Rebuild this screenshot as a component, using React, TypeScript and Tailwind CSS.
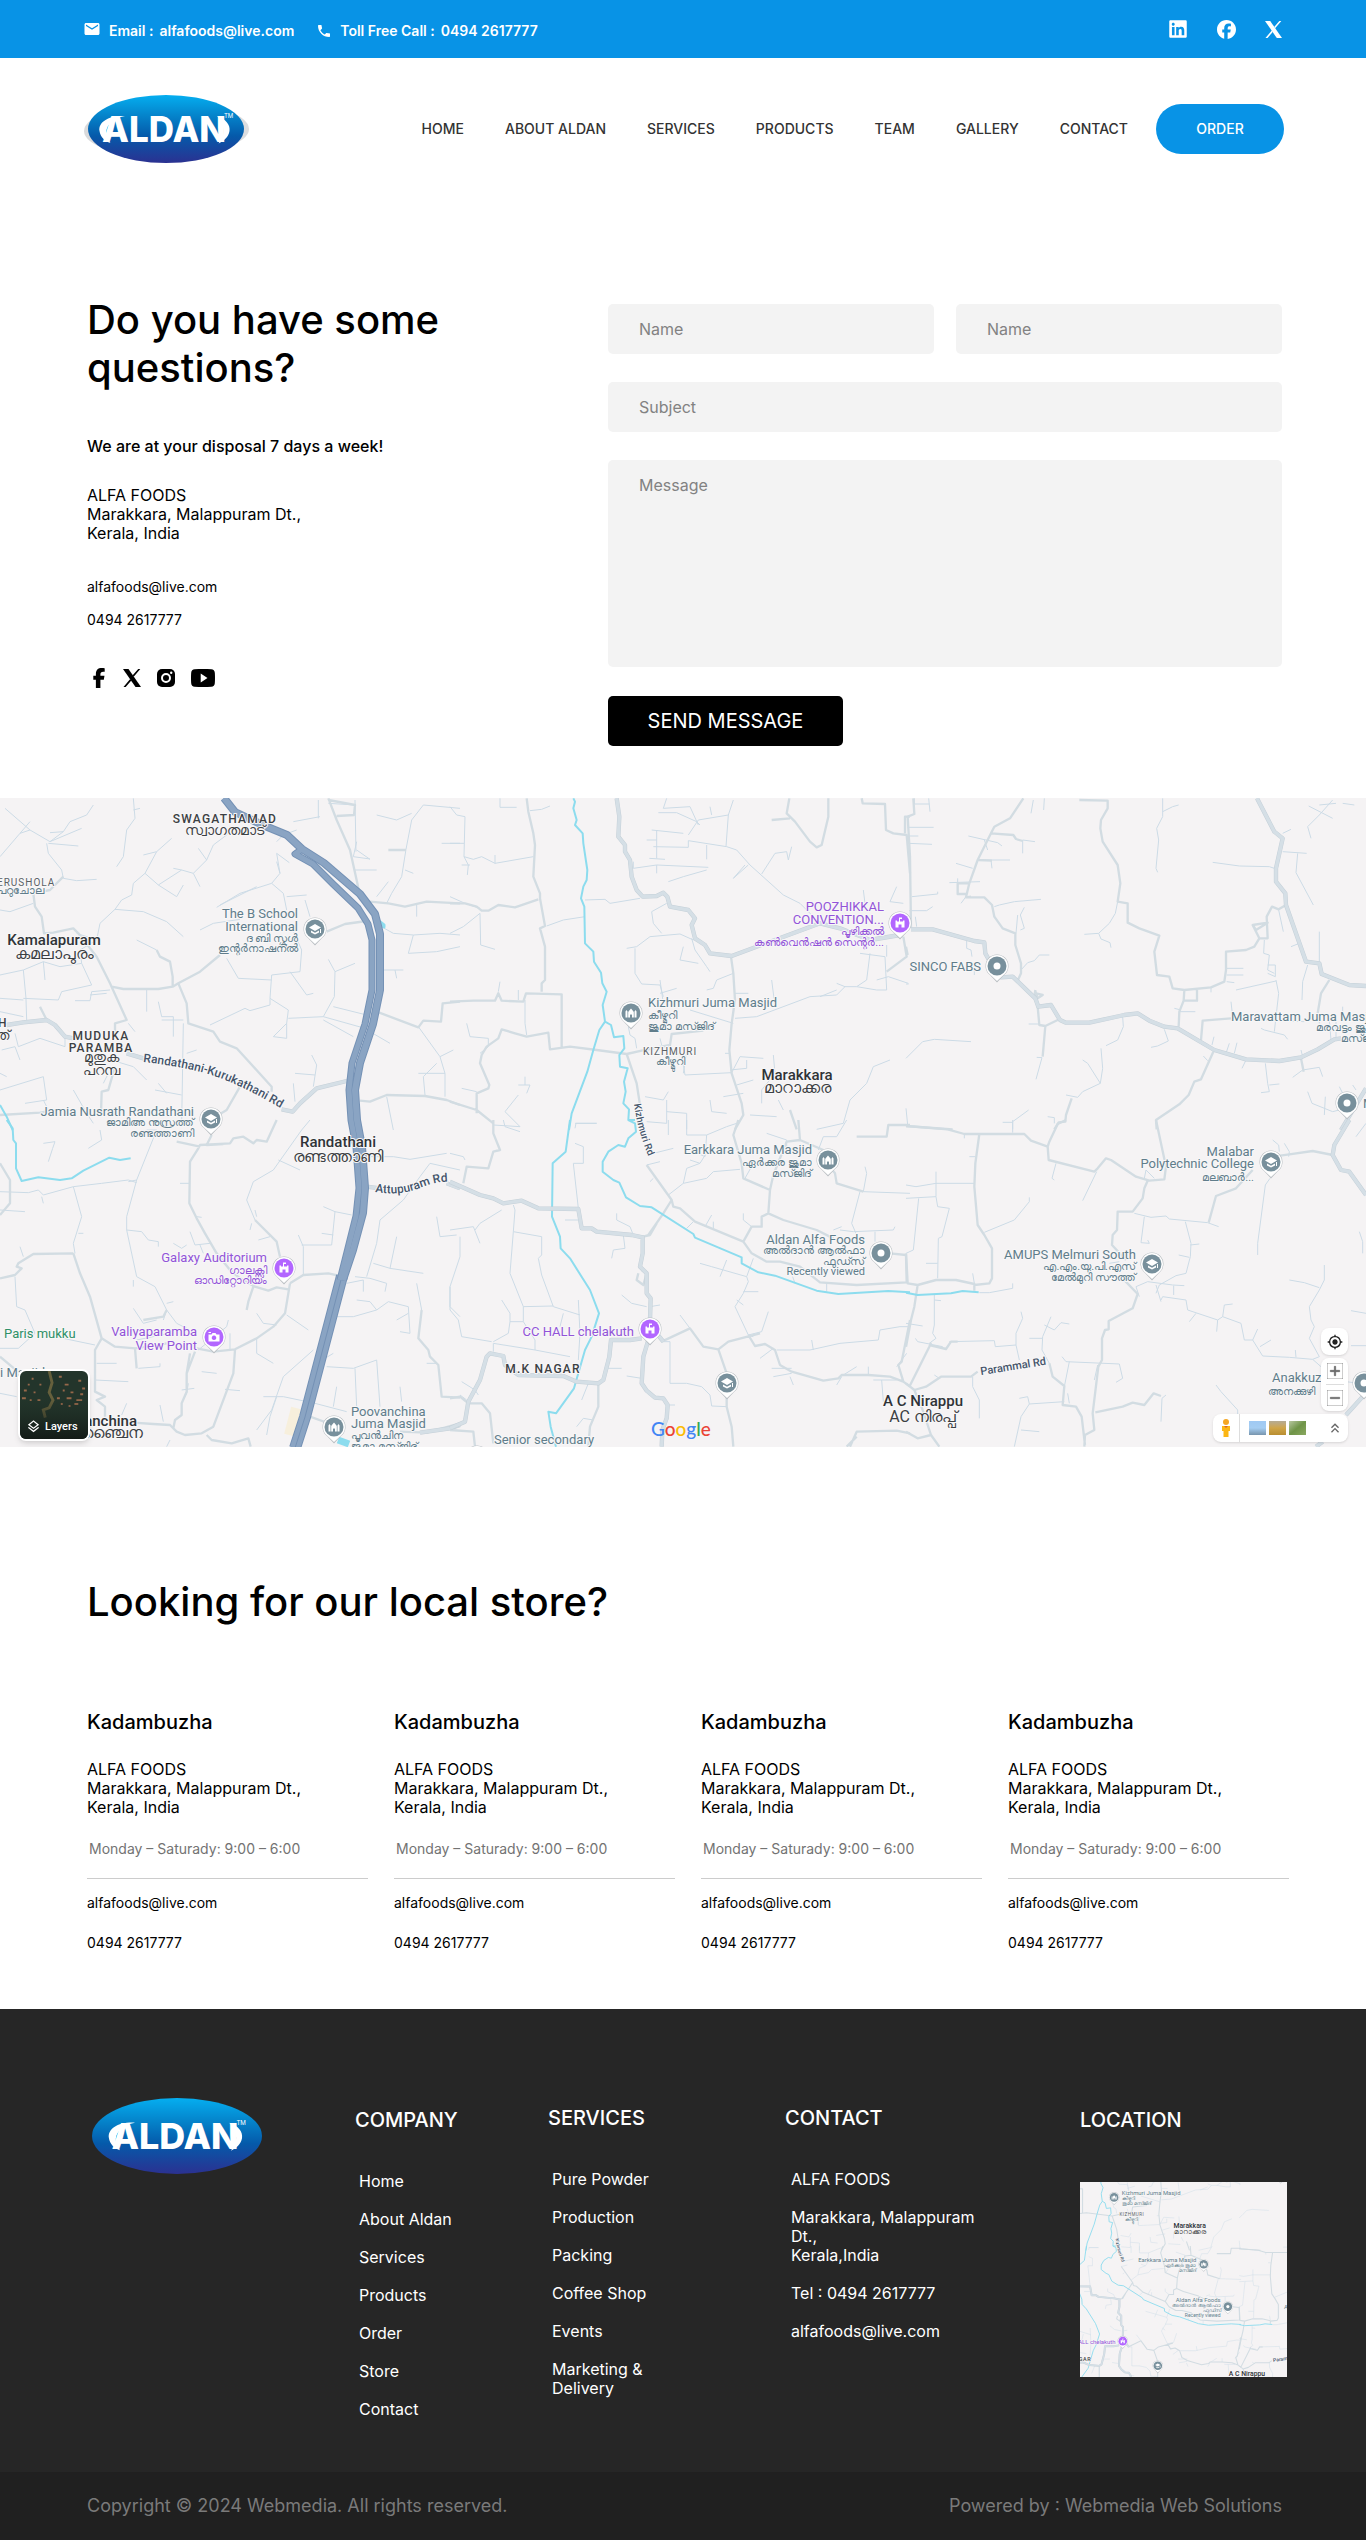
import React from 'react';
import { FaFacebook, FaFacebookF, FaLinkedin } from 'react-icons/fa6';
import { MdEmail, MdPhone, MdMyLocation, MdAdd, MdRemove, MdOutlineLayers, MdKeyboardDoubleArrowUp } from 'react-icons/md';
import { IoLogoYoutube } from 'react-icons/io';

const navItems = ['HOME', 'ABOUT ALDAN', 'SERVICES', 'PRODUCTS', 'TEAM', 'GALLERY', 'CONTACT'];
const companyLinks = ['Home', 'About Aldan', 'Services', 'Products', 'Order', 'Store', 'Contact'];
const serviceLinks = ['Pure Powder', 'Production', 'Packing', 'Coffee Shop', 'Events', 'Marketing & Delivery'];
const stores = [1, 2, 3, 4];

function XIcon({ className }: { className: string }) {
  return (
    <svg viewBox="0 0 18 18" className={className} fill="currentColor" aria-hidden="true">
      <path d="M0 0H5.500L18 18H12.500z" />
      <path d="M15.200 0H17.300L10.700 7.700L9.700 6.300zM0.500 18H2.700L8.300 11.500L7.200 10z" />
    </svg>
  );
}

function InstagramIcon({ className }: { className: string }) {
  return (
    <svg viewBox="0 0 18 18" className={className} aria-hidden="true">
      <rect width="18" height="18" rx="5" fill="currentColor" />
      <circle cx="9" cy="9" r="4" fill="none" stroke="#fff" strokeWidth="2" />
      <circle cx="14.200" cy="3.800" r="1.200" fill="#fff" />
    </svg>
  );
}

function Logo({ id, className, footer }: { id: string; className: string; footer?: boolean }) {
  return (
    <svg viewBox={footer ? '0 -3 166 74' : '0 0 166 68'} className={className} role="img" aria-label="Aldan">
      <defs>
        <linearGradient id={id} x1="0" y1="0" x2="0" y2="1">
          <stop offset="0" stopColor="#05aef0" />
          <stop offset="0.3" stopColor="#0584cb" />
          <stop offset="0.6" stopColor="#055aaa" />
          <stop offset="1" stopColor="#2b3191" />
        </linearGradient>
      </defs>
      {!footer && (
        <>
          <ellipse cx="78" cy="36" rx="77" ry="26" fill="#d9dadc" />
          <ellipse cx="88" cy="34" rx="78" ry="26" fill="#dcdddf" />
        </>
      )}
      <ellipse cx="83" cy="34" rx={footer ? 83 : 78} ry={footer ? 37 : 34} fill={`url(#${id})`} />
      <text x="19" y="47" fontFamily="Inter, sans-serif" fontWeight="800" fontSize="35" fill="#fff">
        ALDAN
      </text>
      <path d="M42 21C26 20 15 27 16.500 36c1 6 5 10 11 12c-5-6-6-13-1-19c4-4.500 10-7 15.500-8z" fill="#fff" />
      <path d="M134 21c9 3 13.500 9 12.500 15c-1 6-5.500 10-11 12.500c4-6 6-10 5-15c-1-5-3-9-6.500-12.500z" fill="#fff" />
      <text x="141" y="23" fontFamily="Inter, sans-serif" fontSize="6" fill="#fff">
        TM
      </text>
    </svg>
  );
}

type Tile = { at: string; thin: string; mid: string; major: string; water: string };

// Road geometry, drawn tile by tile on a grid three times finer than the map.
const tiles: Tile[] = [
  {
    at: 'translate(0 -8) scale(0.333333)',
    thin:
      'M15 55L90 120L150 155L245 115M0 200L60 130L90 95M60 130L90 120M150 155L190 125L210 95L260 75L280 45M140 160L145 190L185 240L190 265L230 272L290 268M145 160L235 168M190 125L150 128M0 285L30 290M100 340L30 365L0 360M400 25L405 85L380 120L370 200L350 230M400 60L420 55M515 145L470 185L435 250L400 280L395 315L365 330L345 358M470 185L430 195M435 250L475 285L530 320L550 285M475 285L545 240L580 250L600 290M545 240L520 235M580 250L620 210L595 175M620 210L640 165L680 135L690 110M600 420L640 400L720 388M650 352L720 310L815 280L850 310L860 360M815 280L840 250L830 190L868 218M840 250L830 215M830 155L850 135L890 120M860 320L920 315M915 330L930 380M955 30L955 85M880 95L960 80M985 40L1065 45M345 358L300 400L290 450L240 480L245 520L275 585L185 605L175 630L70 625M345 358L430 365L500 395L550 440M290 450L230 430M245 520L180 530L130 515L70 540L0 555M130 515L135 570M70 540L78 625L80 690M0 625L70 630M0 665L70 680M5 780L45 770L60 810M45 730L55 770L120 745L195 770L195 740M410 450L470 480M440 600L440 665M225 632L270 632L275 605L330 600M270 615L320 610M475 635L485 680L520 680L520 740M485 690L550 690M550 700L545 1000M630 705L735 655L750 662L810 645L810 625L815 555L900 545L905 480L870 400M680 505L715 565L815 570M810 625L865 660L860 700L820 740L860 745L860 700M865 685L970 680L1003 620L1005 545L1065 520M870 545L920 615L940 610M1000 650L1100 675M970 680L1095 715M970 690L1060 740M985 508L1005 545M660 345L770 290M1070 180L1110 208M1068 185L1065 30M1065 240L1130 240M1070 155L1060 200L1110 207M1218 178L1205 260L1175 310L1160 340M1218 178L1235 90L1270 45L1380 55M1235 70L1190 90L1130 75M1325 160L1380 160M1215 240L1240 250M1135 405L1180 430L1240 435L1320 430L1380 435M1240 435L1225 490L1310 485M1145 540L1210 540M1185 540L1190 565M1310 485L1380 470M1130 320L1165 275M1250 380L1250 345M1255 710L1320 800L1335 850L1335 920M1255 850L1335 850M1320 800L1360 780M1275 915L1270 860L1310 820M1110 725L1170 760M935 795L950 825L940 890M945 855L885 850M880 880L885 935M945 895L930 920M0 900L130 860L140 930L75 940M130 930L150 970M220 900L260 970L280 1000M385 700L405 725M350 815L400 830L440 870M325 850L310 880M465 900L545 915M475 880L500 910M560 790L590 780M0 850L20 860M1160 920L1180 1020',
    mid:
      'M985 25L1010 90L1050 180L1072 280L1078 310M1110 335L1165 340L1215 350L1280 335L1380 340M985 30L1065 45L1062 75L1010 78M980 425L1035 402L1100 393M1165 180L1218 180M190 260L150 300L100 310L105 350L125 380L132 430L160 428L220 415L235 430L290 500L330 580L380 690L345 700L345 745M335 590L370 597L475 597L518 590L518 560L510 515L480 500L470 480M518 590L535 580L600 545L660 495M535 580L560 640L565 700L640 725L660 755L710 775L815 890L815 905M720 890L680 960L655 975M345 830L325 900L305 905L303 970M1130 665L1255 712L1270 692L1323 695L1328 640L1380 635M1080 932L1110 935L1160 915L1275 918L1340 930L1380 945M120 650L140 690M0 975L120 968L170 960',
    major: 'M20 705L70 697L140 690L165 705L195 740L220 745M380 790L440 808M845 958L878 965L900 940L950 895L1040 873L1060 872',
    water: 'M0 945L20 980L38 1020',
  },
  {
    at: 'translate(450 -8) scale(0.333333)',
    thin:
      'M0 50L20 75L45 80L42 200L55 225L52 255M0 160L42 160M35 225L60 225M42 200L70 208L95 200L135 220L250 200M135 195L135 220M150 25L150 52L200 52M240 62L275 58L300 48M0 320L45 340L90 355M90 370L92 465L135 478M90 370L40 410L0 430M290 408L340 390L405 380M405 330L465 328L480 340L570 325M650 25L640 55L720 50L745 105M625 68L680 68L740 95L750 105M715 135L745 90L835 75M780 50L785 75M850 30L835 75L828 170M605 120L700 130M620 120L620 205M590 150L620 150M598 205L645 208M610 170L715 172L715 152L830 170L860 180L900 225L1000 315L1050 340L1110 400M770 165L770 208M895 225L850 265L885 225M935 252L975 190L1010 185L1015 210L1025 170M550 235L620 225L775 232M620 225L620 250M655 275L700 260L770 240M550 215L550 235M610 400L605 365L650 340M610 400L635 430M530 475L560 470L600 440L690 432L730 450M555 475L555 550L575 582L630 585L640 620M725 445L735 480L770 530L780 545M700 470L690 510L745 520M630 610L680 595M770 600L790 595L800 570L850 550M630 570L640 640M855 610L895 610M965 570L972 625M855 685L920 680L1080 620L1160 615L1185 590L1220 590L1280 600L1310 600M1185 590L1160 580M1280 570L1315 560L1375 580M1310 600L1305 500L1230 490M1260 490L1250 570L1220 590M1310 500L1310 465M720 660L850 700M705 855L845 848L870 800L940 805M705 855L695 790L660 795M820 920L880 910M860 885L910 870M840 840L890 835L890 810M970 795L975 850L935 900L935 940M1320 810L1270 830L1250 880L1200 930L1180 1000L1100 1018M780 930L785 965L830 970M985 930L1000 960M900 975L980 980M225 630L225 700L230 735M145 605L150 575M205 630L205 600M50 700L60 740L115 745L115 770L90 790M225 885L225 860M205 915L165 965L210 1010L130 1005M205 885L240 885L230 910M35 895L80 905M375 1000L440 1000M585 920L640 930L655 905M650 930L650 1000L590 995M650 965L710 970L710 1018M630 745L635 765M710 785L700 850M825 790L840 790M1240 300L1245 340M1340 290L1320 335L1360 340M1160 600L1110 620M535 710L540 735L555 745L560 775',
    mid:
      'M230 25L235 65L250 130L255 165L250 260L270 310L270 325L285 408L270 415L285 470L285 570L275 580L275 605M0 340L45 340L80 350L95 362L115 362L145 345L195 352L265 328M0 635L70 632L135 632L145 610L155 632L220 635L228 610L335 613L335 770M80 970L80 910L115 895L118 885L90 820L95 795L110 770L145 745L155 718L195 730L230 740L295 728L300 778L360 770L440 780L530 792M530 792L575 782L660 765L665 732L760 722M530 792L560 880L570 945M0 935L80 960L130 1000M843 500L850 550L855 630L845 700L838 780L845 850L875 940L880 975L855 1018M1235 25L1238 40L1305 42L1308 120L1330 130L1370 135L1380 250M1135 25L1135 80L1115 165L1100 172L1080 155L1035 95L1010 70L1018 25M965 90L1020 85M1310 545L1370 500L1360 440M1380 80L1365 80L1365 130M1020 960L1040 1018',
    major: 'M500 25L508 80L505 140L525 165L525 185L540 210L545 260L560 300L578 320L620 318L640 308L652 320L660 350L715 360L735 385L725 405L735 445L765 465L780 490L845 498L1110 400L1170 415L1260 450L1350 435',
    water: 'M370 25L375 35L370 55L380 90L375 105L398 130L400 160L412 240L410 270L400 290L393 325L403 350L405 460L430 485L432 515L453 548L457 580L470 605L458 645L465 695L483 705L492 742L520 738L523 775L508 795L510 830L533 835L522 875L527 905L520 940L537 958L535 990L555 990M465 695L448 720L430 780L412 845L365 970L357 1020',
  },
  {
    at: 'translate(906 -8) scale(0.333333)',
    thin:
      'M25 25L25 42L70 42M68 25L72 65M5 112L83 112M5 138L37 138M8 160L78 163M18 320L95 312L95 305M10 362L62 362L80 350M28 380L32 410M375 70L382 30M413 60L415 25M187 138L275 158L288 168M350 190L350 150L387 155M235 150L245 180M218 210L312 210M258 235L255 210M150 220L200 235M130 278L222 275M155 265L155 278M180 320L165 340M265 350L280 345L325 335L405 328M343 420L355 415L343 375L355 352M330 430L335 375M345 540L365 518L385 512L400 495L430 495M182 450L182 475L195 480L198 500M205 555L205 525M535 433L578 430L610 400L628 370L635 335M578 430L585 447L612 458L615 473M770 25L770 80L752 115L758 150L750 235L755 247M770 65L800 50L818 45M920 217L1000 228L1090 230L1105 235M1130 130L1155 118M1175 190L1170 248L1222 345M1130 185L1202 190M1208 48L1280 85M1205 110L1240 75L1280 30M1205 110L1215 145M1290 40L1240 45M1310 40L1345 45M1118 360L1132 425M1155 470L1180 460M1240 425L1240 515M1205 525L1190 575L1188 630M1075 450L1073 490L1090 495L1085 540L1105 550M1085 525L1108 525L1108 560L1085 550M1110 570L1118 610L1105 725M990 600L1110 573M962 535L1012 535M962 555L1012 555M962 575L985 578M820 665L868 665M805 655L825 660M915 590L915 607M975 635L980 680M1080 690L1195 695M1065 715L1075 720L1135 735L1145 748M0 582L8 582M0 805L25 780L50 755L85 748L195 755M390 868L408 803L392 802M368 702L400 702M650 680L652 710L635 750L600 767M775 718L787 753L755 768L735 772M585 775L590 835L583 880L545 820L530 810M583 880L530 905L515 922L480 915M960 790L970 760M985 790L993 758M918 765L924 740M892 798L905 812M1020 810L1008 835M1078 820L1085 880L1090 905L1065 908M1090 885L1120 882M1185 780L1190 800M1160 862L1190 840L1240 832L1250 860M1205 905L1218 940L1280 965L1300 960M1258 920L1255 975M1300 890L1310 910M1340 885L1350 900M320 1018L320 995L368 960M320 997L290 997M425 980L445 983L445 1000M0 955L5 1005M1270 690L1275 750M1290 690L1290 750M1310 650L1310 690M1240 670L1240 700',
    mid:
      'M5 80L25 72L22 25M5 80L12 200L15 415M352 25L312 85L265 110L255 130L215 210L190 280L180 322L195 320M255 130L322 135L330 147L350 153M218 210L258 212M190 280L155 280L155 312L182 312M180 322L235 322L258 345L265 380L290 415L328 430L328 465L345 520L345 550L335 572M520 30L605 32L605 55L585 90L583 115L590 155L635 225L643 280L635 335L665 340L665 398L700 415L760 437L745 485L753 555L790 560L800 595L835 600L915 592L955 575L960 540L960 485L1020 480L1045 470L1060 445L1085 445L1082 380L1098 350L1118 358L1140 345M1040 405L1085 398L1050 420L1040 405L1060 445M835 600L833 632L873 632L873 600M833 632L820 665L818 710M1270 570L1245 610L1235 670M395 650L400 705L418 708L455 690M418 708L410 800M390 610L410 615L395 625L388 603M388 600L385 620M885 750L890 692L975 685M922 785L885 868L865 875L848 915L820 943L750 990L752 1018M1185 805L1193 845M497 925L480 975L478 995L458 997L445 1018M0 1008L140 1018M0 470L5 495',
    major: 'M15 418L80 418L205 453L235 457L238 490L255 520L285 562L320 560L388 625L397 650L435 645L462 690L480 698L550 698L655 675L695 670L730 692L775 710L815 715L925 780L1020 808L1120 813L1185 802L1235 778L1285 748L1305 745M1053 25L1105 125L1130 145L1110 235L1110 275L1138 310L1140 345L1200 515L1240 520L1247 552L1330 585L1380 588M1380 895L1305 1020',
    water: '',
  },
  {
    at: 'translate(0 322) scale(0.333333)',
    thin:
      'M0 215L85 218L115 210L130 225L220 200L305 190L385 180L410 188M125 230L130 250M220 200L245 290L220 370L225 400M0 270L75 275M235 340L250 340M130 70L165 65L158 85L145 125M300 30L305 60L265 85M440 30L470 30L410 180L380 290L380 330L410 470L465 500L500 570L490 600M410 180L385 185M380 330L425 335L445 360L475 365L475 380M500 570L530 610L570 630M500 550L520 545M400 480L400 500M400 565L430 610L470 600M45 470L50 560L75 570L105 640L55 685L0 685M60 380L70 410M165 650L285 675M570 335L585 375L630 370M520 370L545 385L560 375M600 375L610 400M590 290L605 292M540 190L568 190M595 690L680 620L685 600M690 640L690 690M510 640L410 660M415 745L480 740L480 730M290 730L350 730M285 780L385 785M565 790L560 820L545 850M545 810L583 805M605 755L650 760M675 808L720 812M380 850L365 885M480 855L490 905M930 0L905 30L820 150L760 185L740 240L765 300M835 120L900 150M765 270L770 290M750 330L755 310M775 360L810 350M895 345L910 380L910 465M905 375L995 375L1005 275L970 260M965 340L1000 345M1005 275L1055 285M1065 470L1110 475L1160 490L1155 515M1040 490L1090 480L1090 515M1000 590L1060 590L1130 570L1110 545L1070 540M1130 570L1165 545L1225 560L1230 640L1200 635M1225 580L1190 600M1100 470L1130 370L1140 300L1210 240L1260 170L1290 130L1380 150M1105 110L1180 110L1230 118L1340 100M1190 350L1170 445L1120 430M1170 445L1270 460M1250 490L1265 570M1310 290L1320 350L1370 345M1350 500L1350 560L1380 590M770 655L770 700L820 730M860 585L925 630M770 580L790 610L830 615M980 740L1060 745L1130 720L1140 860M1065 745L1070 860M1010 800L1000 860M1200 800L1205 845M975 715L1000 700M790 830L850 830L945 850L1040 875M850 770L940 690M830 830L810 890L800 945M850 770L815 870L770 930M1280 730L1310 730M0 820L50 830M500 980L510 960',
    mid:
      'M0 130L30 180L30 250L0 285M830 0L800 65L770 60L760 70L730 50L700 55L690 70L600 75L595 85L570 125L568 250L590 295L615 340L650 400L690 450M635 45L620 75L670 72M530 65L600 80M220 400L100 402L55 430L50 440L65 445L45 465L0 475M220 400L240 460L270 530L305 655L345 680L405 685L410 745M305 655L285 690L285 815L315 830L290 840L315 860L315 890M430 600L490 590L500 570M405 685L500 670M585 695L560 760L570 700M560 760L560 815L545 850L545 885L525 900L520 925M400 908L460 912L510 915L530 935L555 945L605 940L640 920L700 760L705 690M620 945L635 960L695 970L745 955L752 980M765 300L830 365L840 410M690 450L720 475L765 500L805 512L830 502L865 508M870 490L855 580L820 620L770 655L705 688L640 695L590 685M870 490L910 465L985 460L1030 470M760 500L745 545L740 570M1265 570L1255 655L1285 690L1290 710L1315 735L1325 830L1380 833M1200 935L1280 938L1380 910M0 710L60 760M930 890L1000 915',
    major: 'M1100 200L1140 205M1340 190L1380 205M1260 938L1350 925L1380 915',
    water: 'M20 0L38 25L40 60L48 70L48 145L65 183L115 172L180 180L215 175L250 152L328 113L360 120L392 115',
  },
  {
    at: 'translate(450 322) scale(0.333333)',
    thin:
      'M375 25L378 10L440 10M375 70L400 80L400 130L370 130L385 265M0 100L40 110L45 120M160 0L165 20L210 35M590 135L630 125M610 100L670 85M600 185L610 175M700 190L710 145L750 130L775 90M655 225L700 190L770 175L790 155L870 148M710 0L710 45L770 45L830 20L860 10M770 45L765 110L720 90M750 130L720 120M0 330L70 320L90 370M30 350L30 410L0 500L0 570L25 600L35 650L125 665M75 330L90 310L155 270M190 255L195 270L190 335L275 350L275 405L265 415L275 465L310 560L390 585M190 335L180 460L220 560L310 558M220 560L220 605L180 605L175 640L130 665M155 540L180 580L180 605M220 605L255 660L255 690L130 670L130 695M255 690L360 710M385 540L390 640L385 720M340 580L330 620M500 280L500 300L540 320L550 345M520 345L525 385L490 390L485 415M515 525L545 550L590 560M600 560L630 555M750 430L785 440L890 470L895 485M830 420L810 470M910 415L890 470M895 485L880 520L855 560L895 645L910 650M880 515L925 515M860 540L880 555M690 585L720 625M635 665L660 665L660 790L710 790L755 800L780 825L785 858L830 860M345 300L385 300M475 745L515 745M530 768L575 775M445 795L445 850M380 920L400 895L430 900M35 785L75 810L90 770M75 810L85 825M30 825L50 840M710 325L730 305M790 325L790 305M765 320L785 285M880 280L880 300L905 320M895 645L935 635L955 575M980 690L1080 690L1170 670L1285 660L1290 630L1350 620L1380 620M1085 660L1090 690M970 685L930 715M1025 745L965 745M1025 760L970 770M1020 770L1030 795M1180 765L1220 740M1255 765L1255 740M1175 770L1160 795M1270 780L1340 780M1295 780L1300 845M1370 700L1340 740M1240 215L1250 160L1245 140M1240 215L1380 220M1230 215L1205 310L1220 345M1170 330L1210 335L1330 330L1335 320M1275 335L1275 365M1150 330L1175 320M1035 490L1028 470M1130 515L1130 490M950 40L1010 60L1010 80M885 175L910 130M1120 50L1160 50L1190 0M1120 50L1105 90M655 45L655 0M395 840L415 790M660 855L675 855',
    mid:
      'M130 0L130 40L150 90L130 95L115 145L50 140L40 190M590 135L665 240L640 280L595 345L580 350M665 240L670 260L690 265L735 305L880 365L905 400L950 425L990 425L1050 440L1110 487L1220 495L1370 487L1368 405L1320 400M865 0L850 45L875 130L880 175L960 210L955 280L935 290L935 320L905 320L880 365M960 210L970 165L1010 65L1050 60L1045 0M955 280L1000 300L1100 330L1150 355M1130 130L1155 160L1160 190L1240 215M1220 50L1310 50L1315 15L1380 15M1050 60L1120 90M565 460L560 480L580 495L590 460L575 450M635 665L720 625L760 680L805 688L835 665L930 640M805 688L830 760M830 830L830 860L845 920L850 980M895 645L915 678L945 672L975 690L990 735L1025 755L1120 782L1165 775L1175 765L1255 765L1320 770L1360 785L1345 735L1355 725L1380 600M0 835L30 830L55 850L95 850L120 880L130 970M445 795L445 860L420 920L415 980M0 930L70 935L75 980M1200 980L1220 935L1340 932L1380 940M1380 800L1360 785M1190 980L1220 950M580 350L600 345L620 310',
    major: 'M0 185L90 225L130 235L160 250L215 242L265 265L385 267L395 325L425 325L440 335L545 345L578 352L578 400L570 440L590 460L590 520L602 535L600 600M595 660L580 710L575 790L590 812L615 833L640 835L653 855L650 895L637 930L635 980M0 925L45 905L55 845L90 780L110 710L120 700L160 708L165 735L205 765L340 768L380 785L445 790L460 780L478 710L483 660L540 660L575 655M620 640L640 665',
    water: 'M360 0L347 95L308 130L306 290L330 350L332 385L360 415L420 510L447 580L425 650L405 690L372 805L318 880L295 875L302 920L318 980M535 0L555 10L558 35L535 55L525 80L505 75L475 95L458 125L458 155L490 180L508 188L528 232L570 258L605 262L730 342L735 353L875 412L875 430L925 457L975 467L1100 512L1165 522L1315 513L1380 517',
  },
  {
    at: 'translate(906 322) scale(0.333333)',
    thin:
      'M320 0L320 38M175 40L175 55M190 110L208 110M0 195L30 200L90 190L205 190M90 155L90 230L0 235M90 230L95 260L130 265L108 350L97 355L95 475M38 235L22 390L0 400M60 430L95 430M235 337L325 300L370 245L370 232M572 155L530 242M450 130L438 175L445 180M200 460L205 490M220 518L250 518L320 505L320 490M85 525L85 615L80 640L90 655L70 670M85 540L105 542M0 610L50 618M28 655L35 665L110 680M130 665L265 662L268 680L330 675L340 720M345 575L350 595L330 640L330 675M435 590L410 650L408 690L430 730M370 655L410 655M415 615L445 630L465 608L490 612M468 710L480 725L640 732L650 775L630 787M490 725L475 800M485 820L490 850M200 770L200 800L220 840L220 895M85 765L100 775M340 835L365 830L370 852L475 845M370 852L345 890L325 980M345 930L400 935M685 280L735 292L780 288L790 297L905 308L938 320M715 290L705 368L730 370L725 360M838 305L855 370L853 410L840 460L810 467L760 495L750 520M853 375L880 372M818 405L850 412M725 485L800 495L835 497M803 497L803 525M750 495L765 545M765 540L770 530L840 540L845 570L935 600L950 590L1005 610L1015 660L1040 660L1070 708L1150 712L1220 718L1245 740M870 580L850 605M935 600L932 635M950 590L955 555L980 552M1040 660L1055 627M1062 680L1095 660M1170 712L1168 690M700 530L690 500L725 485M1092 175L1078 195L1055 370L1055 405M1255 435L1255 480L1240 510L1210 560L1215 600L1225 620L1210 655L1240 710L1220 718M1150 480L1195 488L1240 503M1335 572L1380 580M1335 677L1380 677M1360 335L1370 365L1370 400M1380 10L1350 50M930 795L945 815L995 870L995 900M765 905L768 835L780 825M1320 785L1360 790M1100 60L1118 75L1120 95M1135 70L1150 95L1148 110M715 175L720 150L745 175M610 430L640 425M565 780L575 735',
    mid:
      'M0 18L125 28L175 42L355 42L375 62L425 80L430 65L455 12L480 0M220 42L208 130L205 200L215 315L235 345L258 385L258 475L250 490L205 495M0 400L5 490L35 495L90 480L150 480L205 492L205 512M35 495L25 560L15 600L0 680M425 80L428 120L565 155L575 145L600 115L615 120L690 170L730 182L775 178L780 140L750 0M725 182L715 205L710 235L680 275L635 275L633 330L620 345L618 375L660 420M1100 110L1150 103L1220 93L1280 105M1040 150L990 205L930 228L908 308M650 475L695 522L680 565L608 603L608 628L597 630L588 655L588 720L577 740L560 880L565 930L537 945L535 980M568 877L650 860L680 848L715 855L743 820L765 828M430 730L440 770L475 798L470 855L510 860L527 890L537 975M0 790L25 810L60 800L105 770L195 770L215 755M10 800L70 680L75 668M70 675L120 687L135 665L155 665M25 810L50 870L75 945L100 980M0 935L35 955L75 945',
    major: 'M1330 0L1285 75L1280 105L1305 150L1330 155L1380 225M1370 830L1320 885M1250 965L1230 980',
    water: 'M0 518L35 525L135 520L170 513L218 517',
  },
];

type PinKind = 'dot' | 'school' | 'mosque' | 'hall' | 'camera';

const pins: [number, number, PinKind][] = [
  [315, 131, 'school'],
  [211, 321, 'school'],
  [631, 215, 'mosque'],
  [900, 125, 'hall'],
  [997, 168, 'dot'],
  [1347, 305, 'dot'],
  [828, 362, 'mosque'],
  [881, 455, 'dot'],
  [1271, 364, 'school'],
  [1152, 466, 'school'],
  [284, 470, 'hall'],
  [214, 539, 'camera'],
  [650, 531, 'hall'],
  [727, 585, 'school'],
  [334, 629, 'mosque'],
  [1364, 585, 'dot'],
  [477, 659, 'mosque'],
];

const glyphs: Record<PinKind, React.ReactNode> = {
  dot: <circle r="3.500" fill="#fff" />,
  school: <path d="M-6 -1.500L0 -5L6 -1.500L0 2zM-4 1.500L0 3.800L4 1.500V3.500L0 5.500L-4 3.500zM5 0H6V4H5z" fill="#fff" />,
  mosque: <path d="M-5.500 4.500V-1.500L-4.500 -3L-3.500 -1.500V4.500zM5.500 4.500V-1.500L4.500 -3L3.500 -1.500V4.500zM-2.800 4.500V-1Q-2 -2.500 0 -4.500Q2 -2.500 2.800 -1V4.500H1V2Q0 0.500 -1 2V4.500z" fill="#fff" />,
  hall: <path d="M-4.500 4.500V-2.500H-3V-1.500H-1V-5.500H2V-4H0V-1.500H3V-2.500H4.500V4.500H1.500V1.500H-1.500V4.500z" fill="#fff" />,
  camera: <path fillRule="evenodd" d="M-5.500 4.500V-2.500H-2.500L-1.500 -4H1.500L2.500 -2.500H5.500V4.500zM0 -1.500A2.300 2.300 0 1 0 0.010 -1.500zM-5.500 -5H-3V-4H-5.500z" fill="#fff" />,
};

const labelStyles = {
  town: 'fill-[#2f3337] text-[15px] font-medium',
  townMl: 'fill-[#3c4043] text-[16px]',
  area: 'fill-[#3c4043] text-[12px] font-medium tracking-widest',
  areaMl: 'fill-[#3c4043] text-[14px]',
  small: 'fill-[#5a6166] text-[10px] tracking-widest',
  place: 'fill-[#607d8b] text-[13px]',
  placeMl: 'fill-[#607d8b] text-[11px]',
  hall: 'fill-[#9254d8] text-[13px]',
  hallMl: 'fill-[#9254d8] text-[11px]',
  park: 'fill-[#2f9067] text-[13px]',
};

type Label = { x: number; y: number; t: string; c: keyof typeof labelStyles; end?: boolean; mid?: boolean };

const labels: Label[] = [
  { x: 225, y: 25, t: 'SWAGATHAMAD', c: 'area', mid: true },
  { x: 225, y: 37, t: 'സ്വാഗതമാട്', c: 'areaMl', mid: true },
  { x: -3, y: 88, t: 'ERUSHOLA', c: 'small' },
  { x: -3, y: 96, t: 'പറുചോല', c: 'placeMl' },
  { x: 54, y: 147, t: 'Kamalapuram', c: 'town', mid: true },
  { x: 54, y: 161, t: 'കമലാപുരം', c: 'townMl', mid: true },
  { x: -2, y: 229, t: 'H', c: 'area' },
  { x: -4, y: 242, t: 'ത്', c: 'areaMl' },
  { x: 101, y: 242, t: 'MUDUKA', c: 'area', mid: true },
  { x: 101, y: 254, t: 'PARAMBA', c: 'area', mid: true },
  { x: 101, y: 264, t: 'മുതുക', c: 'areaMl', mid: true },
  { x: 101, y: 277, t: 'പറമ്പ', c: 'areaMl', mid: true },
  { x: 298, y: 120, t: 'The B School', c: 'place', end: true },
  { x: 298, y: 133, t: 'International', c: 'place', end: true },
  { x: 298, y: 144, t: 'ദ ബി സ്കൂൾ', c: 'placeMl', end: true },
  { x: 298, y: 154, t: 'ഇന്റർനാഷനൽ', c: 'placeMl', end: true },
  { x: 194, y: 318, t: 'Jamia Nusrath Randathani', c: 'place', end: true },
  { x: 194, y: 328, t: 'ജാമിഅ നുസ്രത്ത്', c: 'placeMl', end: true },
  { x: 194, y: 339, t: 'രണ്ടത്താണി', c: 'placeMl', end: true },
  { x: 338, y: 349, t: 'Randathani', c: 'town', mid: true },
  { x: 338, y: 364, t: 'രണ്ടത്താണി', c: 'townMl', mid: true },
  { x: 267, y: 464, t: 'Galaxy Auditorium', c: 'hall', end: true },
  { x: 267, y: 476, t: 'ഗാലക്സി', c: 'hallMl', end: true },
  { x: 267, y: 486, t: 'ഓഡിറ്റോറിയം', c: 'hallMl', end: true },
  { x: 197, y: 538, t: 'Valiyaparamba', c: 'hall', end: true },
  { x: 197, y: 552, t: 'View Point', c: 'hall', end: true },
  { x: 4, y: 540, t: 'Paris mukku', c: 'park' },
  { x: 0, y: 579, t: 'i Masjid', c: 'place' },
  { x: 137, y: 628, t: 'vanchina', c: 'town', end: true },
  { x: 143, y: 640, t: 'വഞ്ചൈന', c: 'townMl', end: true },
  { x: 351, y: 618, t: 'Poovanchina', c: 'place' },
  { x: 351, y: 630, t: 'Juma Masjid', c: 'place' },
  { x: 351, y: 641, t: 'പൂവൻചിന', c: 'placeMl' },
  { x: 351, y: 652, t: 'ജുമാ മസ്ജിദ്', c: 'placeMl' },
  { x: 494, y: 646, t: 'Senior secondary', c: 'place' },
  { x: 543, y: 575, t: 'M.K NAGAR', c: 'area', mid: true },
  { x: 634, y: 538, t: 'CC HALL chelakuth', c: 'hall', end: true },
  { x: 648, y: 209, t: 'Kizhmuri Juma Masjid', c: 'place' },
  { x: 648, y: 221, t: 'കീഴ്മുറി', c: 'placeMl' },
  { x: 648, y: 232, t: 'ജുമാ മസ്ജിദ്', c: 'placeMl' },
  { x: 670, y: 257, t: 'KIZHMURI', c: 'small', mid: true },
  { x: 670, y: 267, t: 'കീഴ്മുറി', c: 'placeMl', mid: true },
  { x: 797, y: 282, t: 'Marakkara', c: 'town', mid: true },
  { x: 797, y: 295, t: 'മാറാക്കര', c: 'townMl', mid: true },
  { x: 884, y: 113, t: 'POOZHIKKAL', c: 'hall', end: true },
  { x: 884, y: 126, t: 'CONVENTION...', c: 'hall', end: true },
  { x: 884, y: 137, t: 'പൂഴിക്കൽ', c: 'hallMl', end: true },
  { x: 884, y: 148, t: 'കൺവെൻഷൻ സെന്റർ...', c: 'hallMl', end: true },
  { x: 981, y: 173, t: 'SINCO FABS', c: 'place', end: true },
  { x: 1231, y: 223, t: 'Maravattam Juma Masjid', c: 'place' },
  { x: 1316, y: 233, t: 'മരവട്ടം ജുമാ', c: 'placeMl' },
  { x: 1341, y: 244, t: 'മസ്ജിദ്', c: 'placeMl' },
  { x: 1363, y: 310, t: 'M', c: 'place' },
  { x: 812, y: 356, t: 'Earkkara Juma Masjid', c: 'place', end: true },
  { x: 812, y: 368, t: 'ഏർക്കര ജുമാ', c: 'placeMl', end: true },
  { x: 812, y: 379, t: 'മസ്ജിദ്', c: 'placeMl', end: true },
  { x: 865, y: 446, t: 'Aldan Alfa Foods', c: 'place', end: true },
  { x: 865, y: 456, t: 'അൽദാൻ ആൽഫാ', c: 'placeMl', end: true },
  { x: 865, y: 467, t: 'ഫുഡ്സ്', c: 'placeMl', end: true },
  { x: 865, y: 477, t: 'Recently viewed', c: 'placeMl', end: true },
  { x: 1254, y: 358, t: 'Malabar', c: 'place', end: true },
  { x: 1254, y: 370, t: 'Polytechnic College', c: 'place', end: true },
  { x: 1254, y: 383, t: 'മലബാർ...', c: 'placeMl', end: true },
  { x: 1136, y: 461, t: 'AMUPS Melmuri South', c: 'place', end: true },
  { x: 1136, y: 472, t: 'എ.എം.യു.പി.എസ്', c: 'placeMl', end: true },
  { x: 1136, y: 483, t: 'മേൽമുറി സൗത്ത്', c: 'placeMl', end: true },
  { x: 1272, y: 584, t: 'Anakkuzhi', c: 'place' },
  { x: 1268, y: 597, t: 'അനക്കുഴി', c: 'placeMl' },
  { x: 923, y: 608, t: 'A C Nirappu', c: 'town', mid: true },
  { x: 923, y: 624, t: 'AC നിരപ്പ്', c: 'townMl', mid: true },
];

const highway = {
  right: 'M224 0L235 14L265 28L287 37L302 51L324 65L360 96L375 116L380 136L380 192L373 226L360 265L355 292L357 322L362 349L365 390L363 415L353 452L343 482',
  left: 'M302 51L295 56L313 66L333 86L358 110L368 126L372 142L372 192L365 226L352 265L349 292L351 322L356 349L359 390L356 418L348 450L340 482',
};

type Area = [x: number, y: number, width: number, height: number];

function MapDrawing({ area, className, id }: { area: Area; className: string; id: string }) {
  const [x0, y0, w, h] = area;
  const full = w > 1000;
  const visible = full ? labels : labels.filter((l) => l.x > x0 - 20 && l.x < x0 + w + 130 && l.y > y0 && l.y < y0 + h);

  return (
    <svg viewBox={area.join(' ')} preserveAspectRatio="xMidYMid slice" className={className} role="img" aria-label="Map of Marakkara">
      <rect x="-2000" y="-200" width="6000" height="1200" fill="#f5f3f4" />
      <g fill="none" strokeLinejoin="round">
        {tiles.map((tile) => (
          <g key={tile.at} transform={tile.at}>
            <path d={tile.thin} stroke="#ccdbe6" strokeWidth="3" />
            <path d={tile.mid} stroke="#d2dce2" strokeWidth="7" />
            <path d={tile.water} stroke="#8cdcee" strokeWidth="6" />
            <path d={tile.major} stroke="#c5d0d8" strokeWidth="13" />
            <path d={tile.major} stroke="#d5dfe6" strokeWidth="10" />
          </g>
        ))}
        <path d="M379 123L384 127L384 129L380 127z" stroke="#8cdcee" strokeWidth="3" />
        <path d="M296 610L289 637" stroke="#f7efdc" strokeWidth="10" />
        <path d="M338 642L349 646" stroke="#8cdcee" strokeWidth="7" />
        <path d="M342 478L305 619L295 650" stroke="#7491b5" strokeWidth="12" />
        <path d="M342 478L305 619L295 650" stroke="#8aa4c3" strokeWidth="10" />
        <path d="M342 478L305 619L295 650" stroke="#7491b5" strokeWidth="1" />
        <path d={highway.left} stroke="#7491b5" strokeWidth="7" />
        <path d={highway.right} stroke="#7491b5" strokeWidth="8" />
        <path d={highway.left} stroke="#8aa4c3" strokeWidth="5" />
        <path d={highway.right} stroke="#8aa4c3" strokeWidth="6" />
      </g>
      <defs>
        <path id={`${id}-kurukathani`} d="M143 264Q180 268 208 276T284 312" />
        <path id={`${id}-attupuram`} d="M375 394Q400 398 420 390T452 384" />
        <path id={`${id}-kizhmuri`} d="M634 306Q638 335 650 362" />
      </defs>
      <g fontFamily="Roboto, 'Noto Sans', sans-serif" stroke="#f8f7f8" strokeWidth="2" strokeLinejoin="round" className="[paint-order:stroke]">
        {visible.map((l) => (
          <text key={`${l.x}-${l.y}`} x={l.x} y={l.y} textAnchor={l.end ? 'end' : l.mid ? 'middle' : 'start'} className={labelStyles[l.c]}>
            {l.t}
          </text>
        ))}
        <g className="fill-[#44546a] text-[12px] font-medium">
          {full && (
            <>
              <text>
                <textPath href={`#${id}-kurukathani`}>Randathani-Kurukathani Rd</textPath>
              </text>
              <text>
                <textPath href={`#${id}-attupuram`}>Attupuram Rd</textPath>
              </text>
            </>
          )}
          <text className="text-[10px]">
            <textPath href={`#${id}-kizhmuri`}>Kizhmuri Rd</textPath>
          </text>
          <text transform="translate(981 577) rotate(-9)" className="text-[11px]">
            Parammal Rd
          </text>
        </g>
      </g>
      {pins.map(([x, y, kind]) => (
        <g key={`${x}-${y}`} transform={`translate(${x} ${y})`}>
          <path d="M0 16.500L-7 9A11.500 11.500 0 1 1 7 9z" fill="#b9bec2" />
          <path d="M0 15L-7 8.500A11 11 0 1 1 7 8.500z" fill="#fff" />
          <circle r="9.500" fill={kind === 'hall' || kind === 'camera' ? '#b266ff' : '#78909c'} />
          {glyphs[kind]}
        </g>
      ))}
    </svg>
  );
}

function MapSection() {
  return (
    <section className="relative h-[649px] overflow-hidden">
      <MapDrawing area={[0, 0, 1366, 649]} className="block h-full w-full" id="main" />
      <p className="absolute bottom-1.5 left-1/2 -translate-x-8 font-[Lato,sans-serif] text-[19px] leading-6 font-medium" aria-label="Google">
        <span className="text-[#4285f4]">G</span>
        <span className="text-[#ea4335]">o</span>
        <span className="text-[#fbbc04]">o</span>
        <span className="text-[#4285f4]">g</span>
        <span className="text-[#34a853]">l</span>
        <span className="text-[#ea4335]">e</span>
      </p>

      <button className="absolute bottom-[6px] left-[18px] size-[72px] overflow-hidden rounded-lg border-2 border-white bg-[#23352b] shadow-md">
        <svg viewBox="0 0 70 70" className="absolute inset-0 h-full w-full" aria-hidden="true">
          <defs>
            <linearGradient id="layers-shade" x1="0" y1="0" x2="0" y2="1">
              <stop offset="0.4" stopColor="#1c2a22" stopOpacity="0" />
              <stop offset="1" stopColor="#141b17" />
            </linearGradient>
          </defs>
          <path d="M30 0L33 12L30 22L34 30L30 38L24 40L26 48" fill="none" stroke="#66603c" strokeWidth="3" />
          <path
            d="M4 20h3M2 28h4M8 14h2M14 22h2M10 30h2M20 14h2M18 30h3M40 6h3M46 14h4M52 22h3M48 28h5M58 30h6M56 34h4M62 24h3M44 20h2M60 10h3M38 28h3M64 18h3M50 36h2M12 8h2M42 34h2"
            stroke="#96684a"
            strokeWidth="2"
          />
          <rect width="70" height="70" fill="url(#layers-shade)" />
        </svg>
        <span className="absolute inset-x-0 bottom-0 flex items-center gap-1 pb-1 pl-1.5 font-[Roboto,sans-serif] text-[11px] font-medium text-white">
          <MdOutlineLayers size={15} />
          Layers
        </span>
      </button>

      <div className="absolute right-[18px] bottom-[5px] flex flex-col items-end gap-[3px] text-[#666]">
        <button className="flex size-[27px] items-center justify-center rounded-lg bg-white text-[#222] shadow" aria-label="My location">
          <MdMyLocation size={16} />
        </button>
        <div className="flex w-[27px] flex-col items-center rounded-lg bg-white shadow">
          <button className="flex h-[26px] items-center" aria-label="Zoom in">
            <MdAdd size={16} stroke="currentColor" strokeWidth={1} />
          </button>
          <span className="h-px w-[18px] bg-[#ddd]" />
          <button className="flex h-[26px] items-center" aria-label="Zoom out">
            <MdRemove size={16} stroke="currentColor" strokeWidth={1} />
          </button>
        </div>
        <div className="flex h-[28px] w-[135px] items-center rounded-lg bg-white shadow">
          <button className="flex h-full w-[27px] items-center justify-center border-r border-[#ddd]" aria-label="Street View">
            <svg viewBox="0 0 10 18" className="h-[18px] w-[10px]" aria-hidden="true">
              <circle cx="5" cy="3" r="3" fill="#f5a623" />
              <path d="M1 7h8v5h-1.500v6h-5v-6h-1.500z" fill="#fbb615" />
              <path d="M3 7h4l-2 2z" fill="#d9662b" />
            </svg>
          </button>
          <div className="flex flex-1 gap-[3px] pl-[9px]">
            <span className="h-[14px] w-[17px] bg-gradient-to-b from-[#9fc9f3] via-[#a5cdf2] to-[#7895ae]" />
            <span className="h-[14px] w-[17px] bg-gradient-to-b from-[#b5ab93] via-[#cfa548] to-[#b98e31]" />
            <span className="h-[14px] w-[17px] bg-gradient-to-br from-[#b9c8a0] via-[#6f9447] to-[#8aa860]" />
          </div>
          <button className="flex w-[27px] justify-center" aria-label="Show imagery">
            <MdKeyboardDoubleArrowUp size={16} />
          </button>
        </div>
      </div>
    </section>
  );
}

export default function App() {
  return (
    <div className="bg-white font-[Inter,sans-serif] text-black">
      {/* Top bar */}
      <div className="flex h-[58px] items-center justify-between bg-[#0893e6] pr-[84px] pl-[83px] text-sm font-semibold text-white">
        <div className="flex items-center pt-1">
          <MdEmail size={18} className="mr-2 -mt-1" />
          <a href="mailto:alfafoods@live.com" className="flex gap-1.5">
            <span>Email :</span>
            <span>alfafoods@live.com</span>
          </a>
          <MdPhone size={16} className="mr-2 ml-[22px]" />
          <a href="tel:04942617777" className="flex gap-1.5">
            <span>Toll Free Call :</span>
            <span>0494 2617777</span>
          </a>
        </div>
        <div className="flex items-center gap-[29px]">
          <a href="#" aria-label="LinkedIn"><FaLinkedin size={20} /></a>
          <a href="#" aria-label="Facebook"><FaFacebook size={19} /></a>
          <a href="#" aria-label="X"><XIcon className="size-[17px]" /></a>
        </div>
      </div>

      {/* Header */}
      <header className="flex items-center justify-between pt-[37px] pr-[82px] pl-[83px]">
        <Logo id="logo-header" className="h-[68px] w-[166px]" />
        <div className="flex items-center">
          <nav className="mr-7 flex gap-[41px] text-sm font-medium text-[#333]">
            {navItems.map((item) => (
              <a key={item} href="#">{item}</a>
            ))}
          </nav>
          <button className="h-[50px] w-[128px] rounded-[25px] bg-[#0893e6] text-sm font-medium text-white">ORDER</button>
        </div>
      </header>

      {/* Contact */}
      <section className="flex pt-[133px] pr-[84px] pb-[52px] pl-[87px]">
        <div className="w-[521px] shrink-0">
          <h2 className="w-[380px] text-[40px] leading-[48px] font-medium">Do you have some questions?</h2>
          <p className="mt-[45px] leading-[19px] font-medium">We are at your disposal 7 days a week!</p>
          <address className="mt-[30px] leading-[19px] not-italic">
            ALFA FOODS<br />
            Marakkara, Malappuram Dt.,<br />
            Kerala, India
          </address>
          <a href="mailto:alfafoods@live.com" className="mt-[35px] block text-sm leading-[17px]">alfafoods@live.com</a>
          <a href="tel:04942617777" className="mt-4 block text-sm leading-[17px]">0494 2617777</a>
          <div className="mt-[38px] flex items-center gap-4 pl-[2px]">
            <a href="#" aria-label="Facebook"><FaFacebookF size={20} /></a>
            <a href="#" aria-label="X" className="-ml-0.5"><XIcon className="size-[18px]" /></a>
            <a href="#" aria-label="Instagram"><InstagramIcon className="size-[18px]" /></a>
            <a href="#" aria-label="YouTube"><IoLogoYoutube size={24} /></a>
          </div>
        </div>

        <form className="flex-1 pt-[8px]">
          <div className="grid grid-cols-2 gap-x-[22px] gap-y-7">
            <input aria-label="First name" placeholder="Name" className="h-[50px] w-full rounded-[5px] bg-[#f3f3f3] px-[31px] placeholder:text-[#828282]" />
            <input aria-label="Last name" placeholder="Name" className="h-[50px] w-full rounded-[5px] bg-[#f3f3f3] px-[31px] placeholder:text-[#828282]" />
            <input aria-label="Subject" placeholder="Subject" className="col-span-2 h-[50px] w-full rounded-[5px] bg-[#f3f3f3] px-[31px] placeholder:text-[#828282]" />
            <textarea aria-label="Message" placeholder="Message" className="col-span-2 block h-[207px] w-full resize-none rounded-[5px] bg-[#f3f3f3] px-[31px] py-[13px] placeholder:text-[#828282]" />
          </div>
          <button type="button" className="mt-[29px] h-[50px] w-[235px] rounded-[5px] bg-black text-xl text-white">SEND MESSAGE</button>
        </form>
      </section>

      <MapSection />

      {/* Stores */}
      <section className="pt-[131px] pr-[77px] pb-[58px] pl-[87px]">
        <h2 className="text-[40px] leading-[48px] font-medium">Looking for our local store?</h2>
        <div className="mt-[84px] grid grid-cols-4 gap-[26px]">
          {stores.map((store) => (
            <article key={store}>
              <h3 className="text-xl leading-6 font-medium">Kadambuzha</h3>
              <address className="mt-[26px] leading-[19px] not-italic">
                ALFA FOODS<br />
                Marakkara, Malappuram Dt.,<br />
                Kerala, India
              </address>
              <p className="mt-[23px] border-b border-[#ccc] pb-[21px] pl-0.5 text-sm leading-[17px] text-[#737373]">Monday – Saturady: 9:00 – 6:00</p>
              <a href="mailto:alfafoods@live.com" className="mt-[15px] block text-sm leading-[17px]">alfafoods@live.com</a>
              <a href="tel:04942617777" className="mt-[23px] block text-sm leading-[17px]">0494 2617777</a>
            </article>
          ))}
        </div>
      </section>

      {/* Footer */}
      <footer className="bg-[#262626] text-white">
        <div className="grid grid-cols-[263px_193px_237px_295px_1fr] pt-[89px] pb-[53px] pl-[92px] leading-[19px]">
          <Logo id="logo-footer" className="h-[76px] w-[170px]" footer />
          <div className="pt-[10px]">
            <h4 className="text-xl leading-6 font-medium">COMPANY</h4>
            <ul className="mt-10 space-y-[19px] pl-1">
              {companyLinks.map((link) => (
                <li key={link}><a href="#">{link}</a></li>
              ))}
            </ul>
          </div>
          <div className="pt-2">
            <h4 className="text-xl leading-6 font-medium">SERVICES</h4>
            <ul className="mt-10 w-[120px] space-y-[19px] pl-1">
              {serviceLinks.map((link) => (
                <li key={link}><a href="#">{link}</a></li>
              ))}
            </ul>
          </div>
          <div className="pt-2">
            <h4 className="text-xl leading-6 font-medium">CONTACT</h4>
            <div className="mt-10 w-[210px] space-y-[19px] pl-1.5">
              <p>ALFA FOODS</p>
              <p>
                Marakkara, Malappuram Dt.,<br />
                Kerala,India
              </p>
              <p>Tel : 0494 2617777</p>
              <p>alfafoods@live.com</p>
            </div>
          </div>
          <div className="pt-[10px]">
            <h4 className="text-xl leading-6 font-medium">LOCATION</h4>
            <MapDrawing area={[556, 181, 455, 429]} className="mt-[50px] block h-[195px] w-[207px]" id="thumb" />
          </div>
        </div>
        <div className="flex h-[68px] items-center justify-between bg-[#202020] pr-[84px] pl-[87px] text-lg text-[#7a7a7a]">
          <p>Copyright © 2024 Webmedia. All rights reserved.</p>
          <p>Powered by : Webmedia Web Solutions</p>
        </div>
      </footer>
    </div>
  );
}
